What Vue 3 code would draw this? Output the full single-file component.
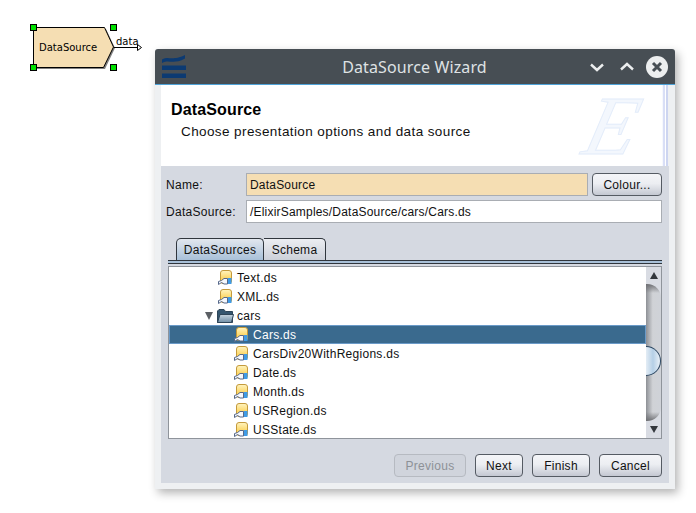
<script setup>
const rows = [
  { label: "Text.ds", level: 1 },
  { label: "XML.ds", level: 1 },
  { label: "cars", level: 1, folder: true },
  { label: "Cars.ds", level: 2, selected: true },
  { label: "CarsDiv20WithRegions.ds", level: 2 },
  { label: "Date.ds", level: 2 },
  { label: "Month.ds", level: 2 },
  { label: "USRegion.ds", level: 2 },
  { label: "USState.ds", level: 2 },
];

const handles = [
  [30, 24],
  [110, 24],
  [30, 64],
  [110, 64],
];
</script>

<template>
  <div class="desktop">
    <svg class="diagram" width="150" height="80" viewBox="0 0 150 80">
      <path d="M35 29H106L115 48L105 69H35Z" fill="#808080" />
      <path d="M33.5 27.5H104.5L113.5 47L103.5 67.5H33.5Z" fill="#f5deb3" stroke="#000" />
      <text x="39" y="51" class="node-text">DataSource</text>
      <text x="116" y="45" class="node-text">data</text>
      <path d="M114 47.5H137" stroke="#000" fill="none" />
      <path d="M137.5 44.5L141.5 47.5L137.5 50.5Z" fill="#fff" stroke="#000" />
      <rect
        v-for="h in handles"
        :key="h.join()"
        :x="h[0] + 0.5"
        :y="h[1] + 0.5"
        width="6"
        height="6"
        fill="#00e000"
        stroke="#000"
      />
    </svg>

    <section class="wizard">
      <header class="titlebar">
        <svg class="logo" width="25" height="25" viewBox="0 0 25 25">
          <path d="M1 5.5C8 1.5 10 7.5 24 1V4.5C12 11 8 5 1 9Z" fill="#0c3a72" />
          <path d="M1 11.5h24v4.5H1zM1 19.5h24v4.5H1z" fill="#0c3a72" />
        </svg>
        <span class="title">DataSource Wizard</span>
        <div class="controls">
          <svg width="16" height="16" viewBox="0 0 16 16">
            <path d="M2 5.5L8 11L14 5.5" stroke="#eceeef" stroke-width="2.4" fill="none" />
          </svg>
          <svg width="16" height="16" viewBox="0 0 16 16">
            <path d="M2 10.5L8 5L14 10.5" stroke="#eceeef" stroke-width="2.4" fill="none" />
          </svg>
          <svg class="close" width="22" height="22" viewBox="0 0 22 22">
            <circle cx="11" cy="11" r="11" fill="#eceeef" />
            <path d="M7 7L15 15M15 7L7 15" stroke="#474e54" stroke-width="3" />
          </svg>
        </div>
      </header>

      <div class="banner">
        <div class="banner-main">
          <h1>DataSource</h1>
          <p>Choose presentation options and data source</p>
          <span class="watermark">E</span>
        </div>
      </div>

      <div class="panel">
        <div class="field">
          <label>Name:</label>
          <div class="input input--name">DataSource</div>
          <button class="btn btn--colour">Colour...</button>
        </div>
        <div class="field">
          <label>DataSource:</label>
          <div class="input">/ElixirSamples/DataSource/cars/Cars.ds</div>
        </div>

        <div class="tabs">
          <div class="tab tab--active">DataSources</div>
          <div class="tab">Schema</div>
        </div>
        <div class="tab-rule"></div>

        <div class="tree">
          <ul class="tree-list">
            <li
              v-for="row in rows"
              :key="row.label"
              class="tree-row"
              :class="[`tree-row--l${row.level}`, { 'tree-row--selected': row.selected }]"
            >
              <template v-if="row.folder">
                <span class="twisty"></span>
                <svg class="icon" width="17" height="16" viewBox="0 0 17 16">
                  <defs>
                    <linearGradient id="folderFront" x1="0" y1="0" x2="0" y2="1">
                      <stop offset="0" stop-color="#c6d4df" />
                      <stop offset="1" stop-color="#6f8ea6" />
                    </linearGradient>
                  </defs>
                  <path d="M0.5 14.5V3L2 1.5H7L8.5 3.5H15.5V14.5Z" fill="#35566f" stroke="#2e4558" />
                  <path d="M0.5 14.5L3 6.5H16.5L14.5 14.5Z" fill="url(#folderFront)" stroke="#2e4558" />
                </svg>
              </template>
              <svg v-else class="icon" width="16" height="16" viewBox="0 0 16 16">
                <defs>
                  <linearGradient id="dbBody" x1="0" y1="0" x2="0" y2="1">
                    <stop offset="0" stop-color="#fff4c0" />
                    <stop offset="0.6" stop-color="#fcd768" />
                    <stop offset="1" stop-color="#e8b040" />
                  </linearGradient>
                </defs>
                <rect x="2.5" y="0.5" width="11" height="13" rx="2.5" fill="url(#dbBody)" stroke="#c49a3c" />
                <path d="M0.5 14.5V11.5L3.5 10.5L6 8.5H9.5V14H6L3.5 12.5Z" fill="#f6f8fc" stroke="#56688a" />
                <rect x="10" y="8" width="3.5" height="6" fill="#3f9be6" />
              </svg>
              <span class="tree-label">{{ row.label }}</span>
            </li>
          </ul>
          <div class="scrollbar">
            <div class="arrow"><span class="tri tri--up"></span></div>
            <div class="track">
              <div class="thumb"></div>
            </div>
            <div class="arrow"><span class="tri tri--down"></span></div>
          </div>
        </div>

        <footer class="actions">
          <button class="btn btn--disabled" disabled>Previous</button>
          <button class="btn btn--next">Next</button>
          <button class="btn btn--finish">Finish</button>
          <button class="btn btn--cancel">Cancel</button>
        </footer>
      </div>
    </section>
  </div>
</template>

<style>
html,
body {
  margin: 0;
  background: #fff;
}
</style>

<style scoped>
.desktop {
  position: relative;
  width: 696px;
  height: 513px;
  overflow: hidden;
  background: #fff;
  font-family: "Liberation Sans", Arial, sans-serif;
  font-size: 12px;
  letter-spacing: 0.28px;
  color: #111;
}

.diagram {
  position: absolute;
  left: 0;
  top: 0;
}

.node-text {
  font-family: "DejaVu Sans", sans-serif;
  font-size: 10px;
  letter-spacing: 0;
  fill: #000;
}

.wizard {
  position: absolute;
  left: 155px;
  top: 49px;
  width: 520px;
  height: 440px;
  display: flex;
  flex-direction: column;
  background: #eef0f2;
  border-radius: 3px 3px 0 0;
  box-shadow: 3px 4px 10px rgba(0, 0, 0, 0.3);
}

.titlebar {
  flex: none;
  height: 36px;
  box-sizing: border-box;
  display: flex;
  align-items: center;
  padding: 0 7px 0 6px;
  background: #474e54;
  border-bottom: 1px solid #4fa3d8;
  border-radius: 3px 3px 0 0;
}

.logo {
  flex: none;
}

.title {
  flex: 1;
  text-align: center;
  padding-left: 54px;
  font-family: "Noto Sans", sans-serif;
  font-size: 16px;
  letter-spacing: 0.12px;
  color: #dfe2e4;
}

.controls {
  display: flex;
  align-items: center;
  gap: 14px;
}

.close {
  margin-left: -3px;
}

.banner {
  flex: none;
  height: 81px;
  margin: 0 7px 0 6px;
  padding-right: 6px;
  background: linear-gradient(90deg, #f6f8fd 0 1px, #d9dff6 1px 3px, #fff 3px 4px, #cdd5f0 4px 6px);
  background-position: right;
  background-size: 6px 100%;
  background-repeat: no-repeat;
}

.banner-main {
  position: relative;
  height: 100%;
  background: #fff;
  padding: 16px 0 0 10px;
  box-sizing: border-box;
}

.banner h1 {
  margin: 0;
  font-size: 16px;
  line-height: 18px;
  font-weight: 700;
  letter-spacing: 0.15px;
  color: #000;
}

.banner p {
  margin: 5px 0 0 10px;
  font-size: 13.5px;
  letter-spacing: 0.4px;
  color: #111;
}

.watermark {
  position: absolute;
  right: 24px;
  top: 6px;
  font-family: "Liberation Serif", serif;
  font-style: italic;
  font-size: 84px;
  line-height: 70px;
  letter-spacing: 0;
  color: #f3f7fd;
  -webkit-text-stroke: 1px #e3ecfa;
  transform: skewX(-14deg);
}

.panel {
  flex: 1;
  margin: 0 6px 6px;
  padding: 7px 7px 0 5px;
  display: flex;
  flex-direction: column;
  background: #d5d9e1;
}

.field {
  display: flex;
  align-items: stretch;
  height: 23px;
  margin-bottom: 4px;
}

.field label {
  flex: none;
  width: 80px;
  line-height: 24px;
}

.input {
  flex: 1;
  box-sizing: border-box;
  border: 1px solid #a9adb3;
  background: #fff;
  padding-left: 3px;
  line-height: 22px;
  letter-spacing: 0.2px;
  color: #111;
}

.input--name {
  background: #f5deb3;
}

.btn {
  box-sizing: border-box;
  height: 23px;
  padding: 0;
  border: 1px solid #555b63;
  border-radius: 4px;
  background: linear-gradient(#f4f5f8, #eceef2 45%, #c4c8d2);
  font: inherit;
  letter-spacing: inherit;
  color: #111;
}

.btn--colour {
  flex: none;
  width: 70px;
  margin-left: 4px;
}

.btn--disabled {
  width: 72px;
  border-color: #b6bac1;
  background: #d0d4dc;
  color: #8d9197;
}

.btn--next {
  width: 48px;
}

.btn--finish {
  width: 58px;
}

.btn--cancel {
  width: 63px;
}

.tabs {
  display: flex;
  margin: 11px 0 0 10px;
  height: 22px;
}

.tab {
  box-sizing: border-box;
  height: 22px;
  width: 62px;
  text-align: center;
  line-height: 22px;
  border: 1px solid #30363d;
  border-bottom: none;
  border-left: none;
  border-radius: 0 5px 0 0;
  background: linear-gradient(#eceef2, #ccd0d9);
}

.tab--active {
  width: 88px;
  border-left: 1px solid #30363d;
  border-radius: 5px 5px 0 0;
  background: linear-gradient(#e2e7ee, #a8c0d8);
}

.tab-rule {
  height: 2px;
  margin-left: 2px;
  border-top: 1px solid #30363d;
  border-bottom: 1px solid #30363d;
  background: #a8c0d8;
}

.tree {
  display: flex;
  height: 173px;
  box-sizing: border-box;
  margin: 2px 0 0 2px;
  border: 1px solid #8f949b;
  background: #fff;
}

.tree-list {
  flex: 1;
  min-width: 0;
  margin: 0;
  padding: 1px 0 0;
  list-style: none;
  overflow: hidden;
}

.tree-row {
  display: flex;
  align-items: center;
  height: 19px;
  box-sizing: border-box;
  white-space: nowrap;
}

.tree-row--l1 {
  padding-left: 49px;
}

.tree-row--l2 {
  padding-left: 65px;
}

.tree-row--selected {
  background: #3a6a8e;
  outline: 1px solid #6a9ac8;
  outline-offset: -1px;
  color: #fff;
}

.twisty {
  width: 0;
  height: 0;
  margin: 0 4px 0 -13px;
  border-left: 4.5px solid transparent;
  border-right: 4.5px solid transparent;
  border-top: 8px solid #5b5f64;
}

.icon {
  flex: none;
}

.tree-label {
  margin-left: 3px;
}

.scrollbar {
  flex: none;
  width: 15px;
  display: flex;
  flex-direction: column;
  background: #d9dce3;
}

.arrow {
  flex: none;
  height: 17px;
  display: flex;
  align-items: center;
  justify-content: center;
  background: #d9dce3;
}

.tri {
  width: 0;
  height: 0;
  border-left: 4px solid transparent;
  border-right: 4px solid transparent;
}

.tri--up {
  border-bottom: 7px solid #33373c;
}

.tri--down {
  border-top: 7px solid #33373c;
}

.track {
  flex: 1;
  position: relative;
  border-radius: 0 14px 14px 0;
  background:
    linear-gradient(#6f7074, rgba(120, 120, 124, 0) 9px),
    linear-gradient(0deg, #6f7074, rgba(120, 120, 124, 0) 9px),
    linear-gradient(90deg, #8e9196, #d0d2d6 45%, #cfd2d8);
}

.thumb {
  position: absolute;
  left: 0;
  right: 0;
  top: 62px;
  height: 30px;
  box-sizing: border-box;
  border: 1px solid #2c4762;
  border-left: none;
  border-radius: 0 15px 15px 0;
  background: linear-gradient(90deg, #e4edf5, #b5cfe6 50%, #eaf1f8);
}

.actions {
  display: flex;
  justify-content: flex-end;
  gap: 9px;
  margin-top: 15px;
}
</style>
